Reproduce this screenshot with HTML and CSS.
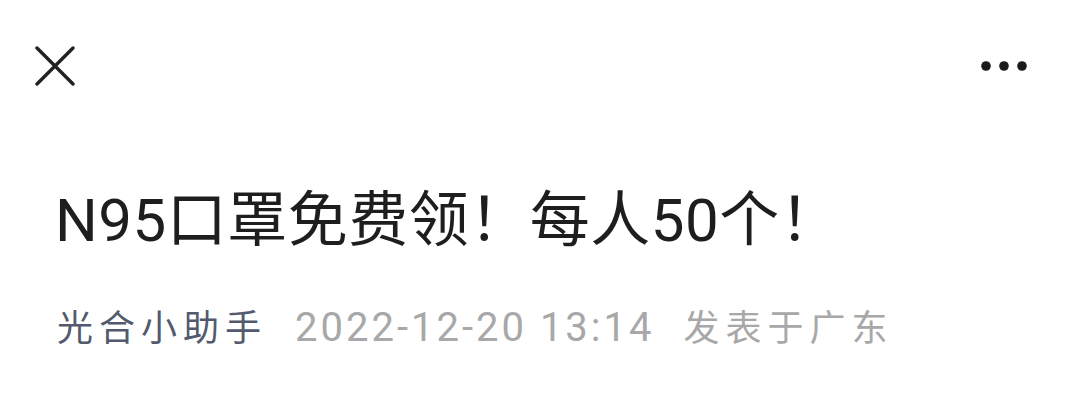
FILE: index.html
```html
<!DOCTYPE html>
<html lang="zh-CN">
<head>
<meta charset="utf-8">
<link rel="stylesheet" href="styles.css">
</head>
<body>
<div class="page">
  <header class="topbar">
    <svg class="icon-close" width="40" height="40" viewBox="0 0 40 40">
      <path d="M2 2 L38 38 M38 2 L2 38" stroke="#222" stroke-width="3.4" stroke-linecap="round" fill="none"/>
    </svg>
    <svg class="icon-more" width="48" height="12" viewBox="0 0 48 12">
      <circle cx="6" cy="6" r="4.8" fill="#1a1a1a"/>
      <circle cx="24" cy="6" r="4.8" fill="#1a1a1a"/>
      <circle cx="42" cy="6" r="4.8" fill="#1a1a1a"/>
    </svg>
  </header>
  <h1 class="title">N95口罩免费领！每人50个！</h1>
  <div class="meta">
    <span class="author">光合小助手</span>
    <span class="date">2022-12-20 13:14</span>
    <span class="loc">发表于广东</span>
  </div>
</div>
</body>
</html>
```
FILE: styles.css
```css
html, body {
  margin: 0;
  padding: 0;
  background: #ffffff;
}
body {
  font-family: "Noto Sans CJK SC", "Noto Sans", sans-serif;
  width: 1078px;
  height: 419px;
  overflow: hidden;
}
.page {
  display: flex;
  flex-direction: column;
}
.topbar {
  height: 132px;
  display: flex;
  align-items: center;
  justify-content: space-between;
  padding: 0 50px 0 35px;
}
.icon-close {
  display: block;
}
.icon-more {
  display: block;
}
.title {
  margin: 49px 0 0 55px;
  font-family: Roboto, "Noto Sans CJK SC", sans-serif;
  font-size: 60px;
  line-height: 80px;
  font-weight: 400;
  letter-spacing: 0.5px;
  color: #1e1e1e;
  white-space: nowrap;
}
.meta {
  margin: 39px 0 0 57px;
  display: flex;
  align-items: baseline;
  font-size: 36px;
  line-height: 50px;
  white-space: nowrap;
}
.author {
  color: #535a6e;
  letter-spacing: 6px;
  margin-right: 28px;
}
.date {
  font-family: Roboto, "Noto Sans CJK SC", sans-serif;
  font-size: 40px;
  letter-spacing: 3px;
  color: #a8a8a8;
  margin-right: 29px;
}
.loc {
  color: #a8a8a8;
  letter-spacing: 6px;
}
```
